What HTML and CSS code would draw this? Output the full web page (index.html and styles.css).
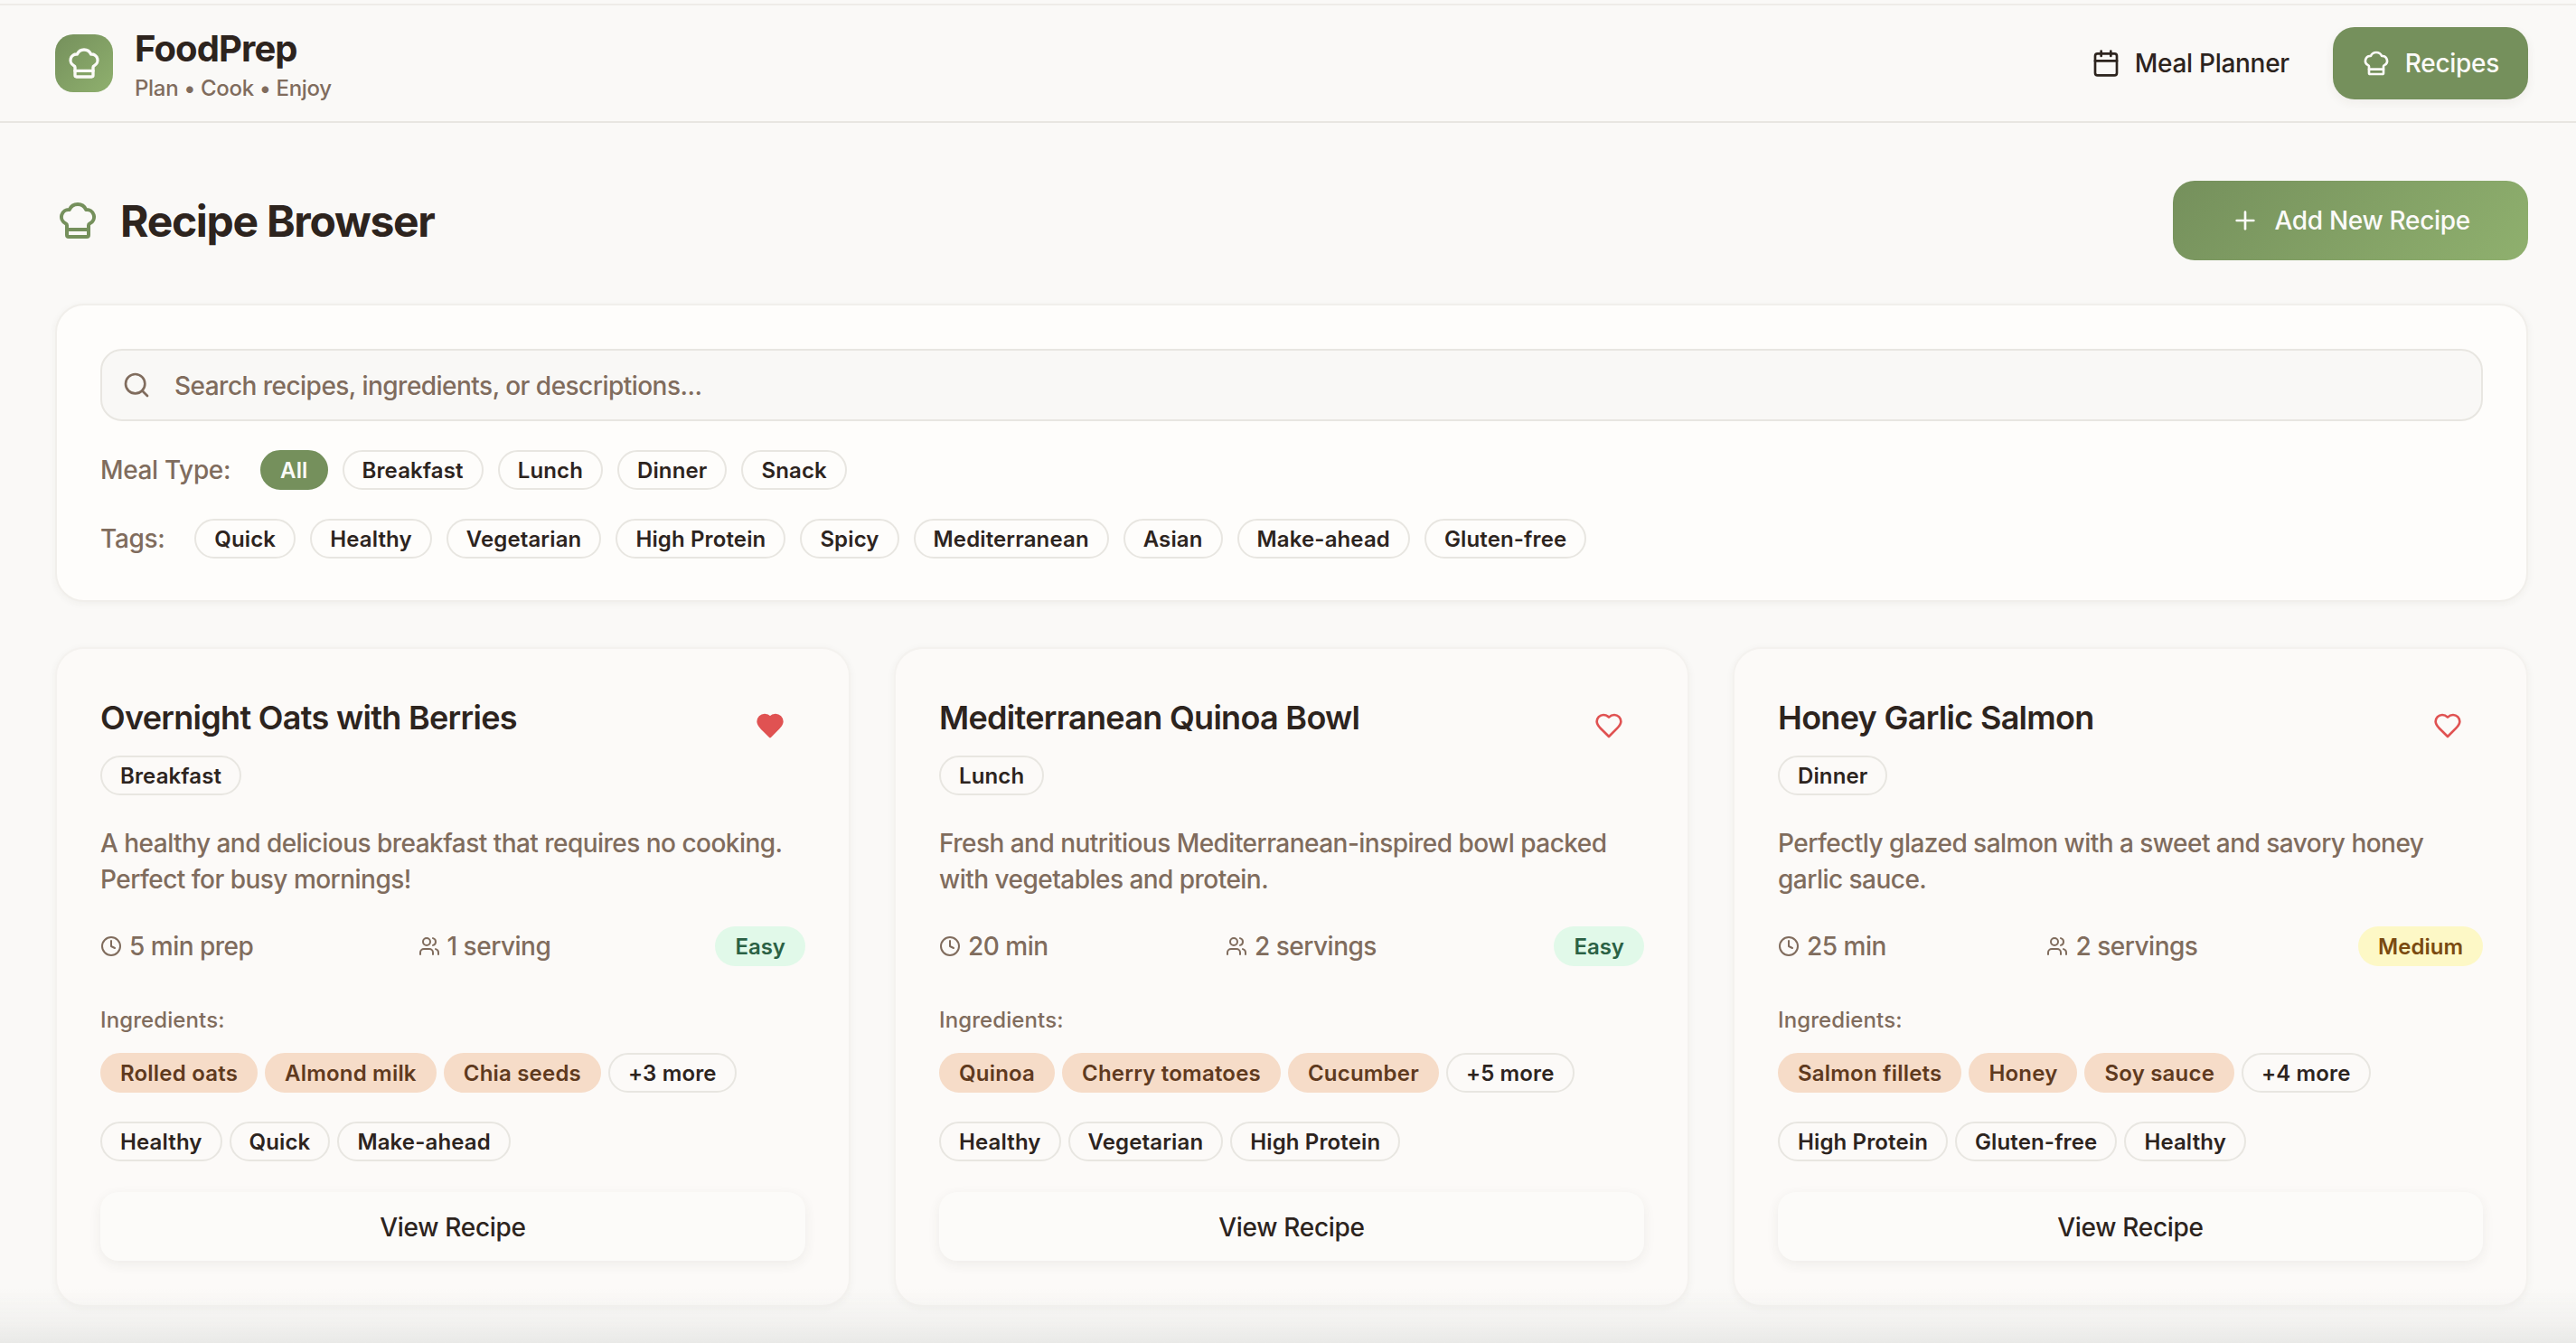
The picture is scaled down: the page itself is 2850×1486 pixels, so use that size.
FILE: index.html
```html
<!DOCTYPE html>
<html lang="en">
<head>
<meta charset="utf-8">
<title>FoodPrep</title>
<link rel="stylesheet" href="styles.css">
</head>
<body>
<svg class="sprite" aria-hidden="true">
  <symbol id="hat" viewBox="0 0 24 24"><path d="M17 21a1 1 0 0 0 1-1v-5.35c0-.457.316-.844.727-1.041a4 4 0 0 0-2.134-7.589 5 5 0 0 0-9.186 0 4 4 0 0 0-2.134 7.588c.411.198.727.585.727 1.041V20a1 1 0 0 0 1 1Z"/><path d="M6 17h12"/></symbol>
  <symbol id="calendar" viewBox="0 0 24 24"><path d="M8 2v4"/><path d="M16 2v4"/><rect width="18" height="18" x="3" y="4" rx="2"/><path d="M3 10h18"/></symbol>
  <symbol id="plus" viewBox="0 0 24 24"><path d="M5 12h14"/><path d="M12 5v14"/></symbol>
  <symbol id="search" viewBox="0 0 24 24"><circle cx="11" cy="11" r="8"/><path d="m21 21-4.3-4.3"/></symbol>
  <symbol id="clock" viewBox="0 0 24 24"><circle cx="12" cy="12" r="10"/><path d="M12 6v6l4 2"/></symbol>
  <symbol id="users" viewBox="0 0 24 24"><path d="M16 21v-2a4 4 0 0 0-4-4H6a4 4 0 0 0-4 4v2"/><circle cx="9" cy="7" r="4"/><path d="M22 21v-2a4 4 0 0 0-3-3.87"/><path d="M16 3.13a4 4 0 0 1 0 7.75"/></symbol>
  <symbol id="heart" viewBox="0 0 24 24"><path d="M19 14c1.49-1.46 3-3.21 3-5.5A5.5 5.5 0 0 0 16.5 3c-1.76 0-3 .5-4.5 2-1.5-1.5-2.74-2-4.5-2A5.5 5.5 0 0 0 2 8.500c0 2.300 1.500 4.050 3 5.500l7 7Z"/></symbol>
</svg>

<header class="topbar">
  <div class="brand">
    <div class="logo"><svg class="icon icon-40"><use href="#hat"/></svg></div>
    <div class="brand-text">
      <div class="brand-name">FoodPrep</div>
      <div class="brand-tag">Plan • Cook • Enjoy</div>
    </div>
  </div>
  <nav class="nav">
    <a class="nav-btn"><svg class="icon icon-32"><use href="#calendar"/></svg>Meal Planner</a>
    <a class="nav-btn nav-active"><svg class="icon icon-32"><use href="#hat"/></svg>Recipes</a>
  </nav>
</header>

<main class="main">
  <div class="title-row">
    <h1 class="page-title"><svg class="icon icon-48 green"><use href="#hat"/></svg><span class="page-title-text">Recipe Browser</span></h1>
    <button class="add-btn"><svg class="icon icon-32"><use href="#plus"/></svg>Add New Recipe</button>
  </div>

  <section class="filters">
    <div class="search"><svg class="icon icon-32"><use href="#search"/></svg><span class="search-text">Search recipes, ingredients, or descriptions...</span></div>
    <div class="filter-row">
      <span class="filter-label">Meal Type:</span>
      <span class="pill pill-on">All</span><span class="pill">Breakfast</span><span class="pill">Lunch</span><span class="pill">Dinner</span><span class="pill">Snack</span>
    </div>
    <div class="filter-row">
      <span class="filter-label">Tags:</span>
      <span class="pill">Quick</span><span class="pill">Healthy</span><span class="pill">Vegetarian</span><span class="pill">High Protein</span><span class="pill">Spicy</span><span class="pill">Mediterranean</span><span class="pill">Asian</span><span class="pill">Make-ahead</span><span class="pill">Gluten-free</span>
    </div>
  </section>

  <section class="cards">
    <article class="card">
      <div class="card-head">
        <div class="card-heading"><h2 class="card-title">Overnight Oats with Berries</h2><span class="pill">Breakfast</span></div>
        <button class="fav"><svg class="icon icon-32 heart filled"><use href="#heart"/></svg></button>
      </div>
      <p class="desc">A healthy and delicious breakfast that requires no cooking. Perfect for busy mornings!</p>
      <div class="meta">
        <span class="meta-item"><svg class="icon icon-24"><use href="#clock"/></svg>5 min prep</span>
        <span class="meta-item"><svg class="icon icon-24"><use href="#users"/></svg>1 serving</span>
        <span class="pill level easy">Easy</span>
      </div>
      <div class="ing-label">Ingredients:</div>
      <div class="chips"><span class="pill ing">Rolled oats</span><span class="pill ing">Almond milk</span><span class="pill ing">Chia seeds</span><span class="pill">+3 more</span></div>
      <div class="chips tags"><span class="pill">Healthy</span><span class="pill">Quick</span><span class="pill">Make-ahead</span></div>
      <button class="view">View Recipe</button>
    </article>

    <article class="card">
      <div class="card-head">
        <div class="card-heading"><h2 class="card-title">Mediterranean Quinoa Bowl</h2><span class="pill">Lunch</span></div>
        <button class="fav"><svg class="icon icon-32 heart"><use href="#heart"/></svg></button>
      </div>
      <p class="desc">Fresh and nutritious Mediterranean-inspired bowl packed with vegetables and protein.</p>
      <div class="meta">
        <span class="meta-item"><svg class="icon icon-24"><use href="#clock"/></svg>20 min</span>
        <span class="meta-item"><svg class="icon icon-24"><use href="#users"/></svg>2 servings</span>
        <span class="pill level easy">Easy</span>
      </div>
      <div class="ing-label">Ingredients:</div>
      <div class="chips"><span class="pill ing">Quinoa</span><span class="pill ing">Cherry tomatoes</span><span class="pill ing">Cucumber</span><span class="pill">+5 more</span></div>
      <div class="chips tags"><span class="pill">Healthy</span><span class="pill">Vegetarian</span><span class="pill">High Protein</span></div>
      <button class="view">View Recipe</button>
    </article>

    <article class="card">
      <div class="card-head">
        <div class="card-heading"><h2 class="card-title">Honey Garlic Salmon</h2><span class="pill">Dinner</span></div>
        <button class="fav"><svg class="icon icon-32 heart"><use href="#heart"/></svg></button>
      </div>
      <p class="desc">Perfectly glazed salmon with a sweet and savory honey garlic sauce.</p>
      <div class="meta">
        <span class="meta-item"><svg class="icon icon-24"><use href="#clock"/></svg>25 min</span>
        <span class="meta-item"><svg class="icon icon-24"><use href="#users"/></svg>2 servings</span>
        <span class="pill level medium">Medium</span>
      </div>
      <div class="ing-label">Ingredients:</div>
      <div class="chips"><span class="pill ing">Salmon fillets</span><span class="pill ing">Honey</span><span class="pill ing">Soy sauce</span><span class="pill">+4 more</span></div>
      <div class="chips tags"><span class="pill">High Protein</span><span class="pill">Gluten-free</span><span class="pill">Healthy</span></div>
      <button class="view">View Recipe</button>
    </article>
  </section>
</main>
<div class="bottom-fade"></div>
</body>
</html>
```
FILE: styles.css
```css
* { box-sizing: border-box; }
html, body { margin: 0; height: 100%; }
body {
  background: #faf9f7;
  color: #2d241e;
  font-family: Inter, "Liberation Sans", sans-serif;
  padding-top: 4px;
  overflow: hidden;
}
.sprite { display: none; }
.icon { fill: none; stroke: currentColor; stroke-width: 2; stroke-linecap: round; stroke-linejoin: round; flex: none; display: block; }
.icon-24 { width: 24px; height: 24px; }
.icon-32 { width: 32px; height: 32px; }
.icon-40 { width: 40px; height: 40px; }
.icon-48 { width: 48px; height: 48px; }
.green { color: #75905c; margin-left: 1px; }

.topbar {
  height: 132px;
  border-top: 2px solid #eeece8;
  border-bottom: 2px solid #e8e6e1;
  padding: 0 53px 0 61px;
  display: flex;
  align-items: center;
  justify-content: space-between;
}
.brand { display: flex; align-items: center; gap: 24px; }
.logo {
  width: 64px; height: 64px;
  border-radius: 20px;
  background: linear-gradient(135deg, #75905c, #8fb06e);
  color: #fbfaf8;
  display: flex; align-items: center; justify-content: center;
}
.brand-text { padding-top: 4px; }
.brand-name { font-size: 40px; font-weight: 700; line-height: 48px; letter-spacing: -0.9px; }
.brand-tag { margin-top: 4px; font-size: 24px; line-height: 32px; color: #806c5d; letter-spacing: -0.3px; font-weight: 450; }
.nav { display: flex; gap: 16px; }
.nav-btn {
  height: 80px;
  padding: 0 32px;
  border-radius: 24px;
  display: flex; align-items: center; gap: 16px;
  font-size: 28px; font-weight: 500; letter-spacing: -0.3px;
}
.nav-active { background: #75905c; color: #fbfaf8; box-shadow: 0 4px 12px rgba(60,50,40,.06); }

.main { padding: 64px 53px 0 61px; }
.title-row { display: flex; align-items: center; justify-content: space-between; margin-bottom: 48px; }
.page-title { display: flex; align-items: center; gap: 23px; margin: 0; font-size: 48px; line-height: 64px; font-weight: 700; letter-spacing: -1.3px; }
.page-title-text { padding-top: 2px; }
.add-btn {
  height: 88px;
  padding: 0 64px;
  border: 0;
  border-radius: 24px;
  background: linear-gradient(135deg, #75905c, #8fb06e);
  color: #fbfaf8;
  display: flex; align-items: center; gap: 16px;
  font: 500 28px Inter, "Liberation Sans", sans-serif;
  letter-spacing: -0.3px;
}

.filters {
  background: #fefdfb;
  border: 2px solid #f1efeb;
  border-radius: 32px;
  padding: 48px 48px 46px;
  box-shadow: 0 2px 8px rgba(60,50,40,.05);
  margin-bottom: 50px;
}
.search {
  height: 80px;
  border: 2px solid #e8e6e1;
  border-radius: 24px;
  background: #f9f8f6;
  color: #806c5d;
  display: flex; align-items: center; gap: 24px;
  padding: 0 22px 0 22px;
  font-size: 28px;
  letter-spacing: -0.53px;
}
.search-text { padding-top: 2px; font-weight: 450; margin-left: 2px; }
.filter-row { display: flex; align-items: center; gap: 16px; margin-top: 32px; }
.filter-label { font-size: 28px; font-weight: 500; color: #806c5d; margin-right: 17px; letter-spacing: -0.35px; }
.pill {
  display: inline-flex; align-items: center;
  height: 44px;
  padding: 0 20px;
  border: 2px solid #e8e6e1;
  border-radius: 22px;
  font-size: 24px; font-weight: 600;
  letter-spacing: 0.13px;
  white-space: nowrap;
}
.pill-on { background: #75905c; border-color: #75905c; color: #fbfaf8; }

.cards { display: grid; grid-template-columns: repeat(3, 1fr); gap: 48px; }
.card {
  height: 730px;
  background: #fcfaf8;
  border: 2px solid #f4f2ef;
  border-radius: 32px;
  padding: 47px 48px 0;
  box-shadow: 0 2px 8px rgba(60,50,40,.05);
}
.card-head { display: flex; justify-content: space-between; align-items: flex-start; height: 116px; }
.card-heading { display: flex; flex-direction: column; align-items: flex-start; gap: 14px; }
.card-title { margin: 1px 0 0; font-size: 36px; line-height: 56px; font-weight: 600; letter-spacing: -0.7px; }
.fav { width: 78px; height: 76px; padding: 0; border: 0; background: none; display: flex; align-items: center; justify-content: center; }
.heart { color: #e05252; }
.filled { fill: #e05252; }
.desc { margin: 32px 0; font-size: 28px; line-height: 40px; color: #806c5d; height: 80px; letter-spacing: -0.53px; font-weight: 450; }
.meta { display: flex; align-items: center; justify-content: space-between; font-size: 28px; color: #806c5d; letter-spacing: -0.5px; font-weight: 450; }
.meta-item { display: flex; align-items: center; gap: 8px; }
.level { border: 0; padding: 0 22px; font-size: 24px; letter-spacing: 0; }
.easy { background: #e1f9e9; color: #2b6144; }
.medium { background: #fdf8c6; color: #7a4a10; }
.ing-label { margin-top: 43px; font-size: 24px; line-height: 32px; font-weight: 500; color: #806c5d; letter-spacing: 0.1px; padding-top: 1px; height: 32px; }
.chips { display: flex; gap: 8px; margin-top: 21px; }
.tags { margin-top: 32px; }
.ing { background: #f6dcc8; border-color: #f6dcc8; color: #5f3a1e; letter-spacing: 0.2px; }
.view {
  display: block;
  width: 100%; height: 76px;
  margin-top: 34px;
  padding: 2px 0 0;
  border: 0;
  border-radius: 20px;
  background: #fcfbf9;
  color: #2d241e;
  font: 500 28px Inter, "Liberation Sans", sans-serif;
  letter-spacing: -0.3px;
  box-shadow: 0 4px 14px rgba(60,50,40,.07);
}
.bottom-fade {
  position: fixed; left: 0; right: 0; bottom: 0;
  height: 60px;
  background: linear-gradient(to bottom, rgba(233,233,231,0), rgba(233,233,231,.45) 60%, rgba(233,233,231,1));
  pointer-events: none;
}
```
